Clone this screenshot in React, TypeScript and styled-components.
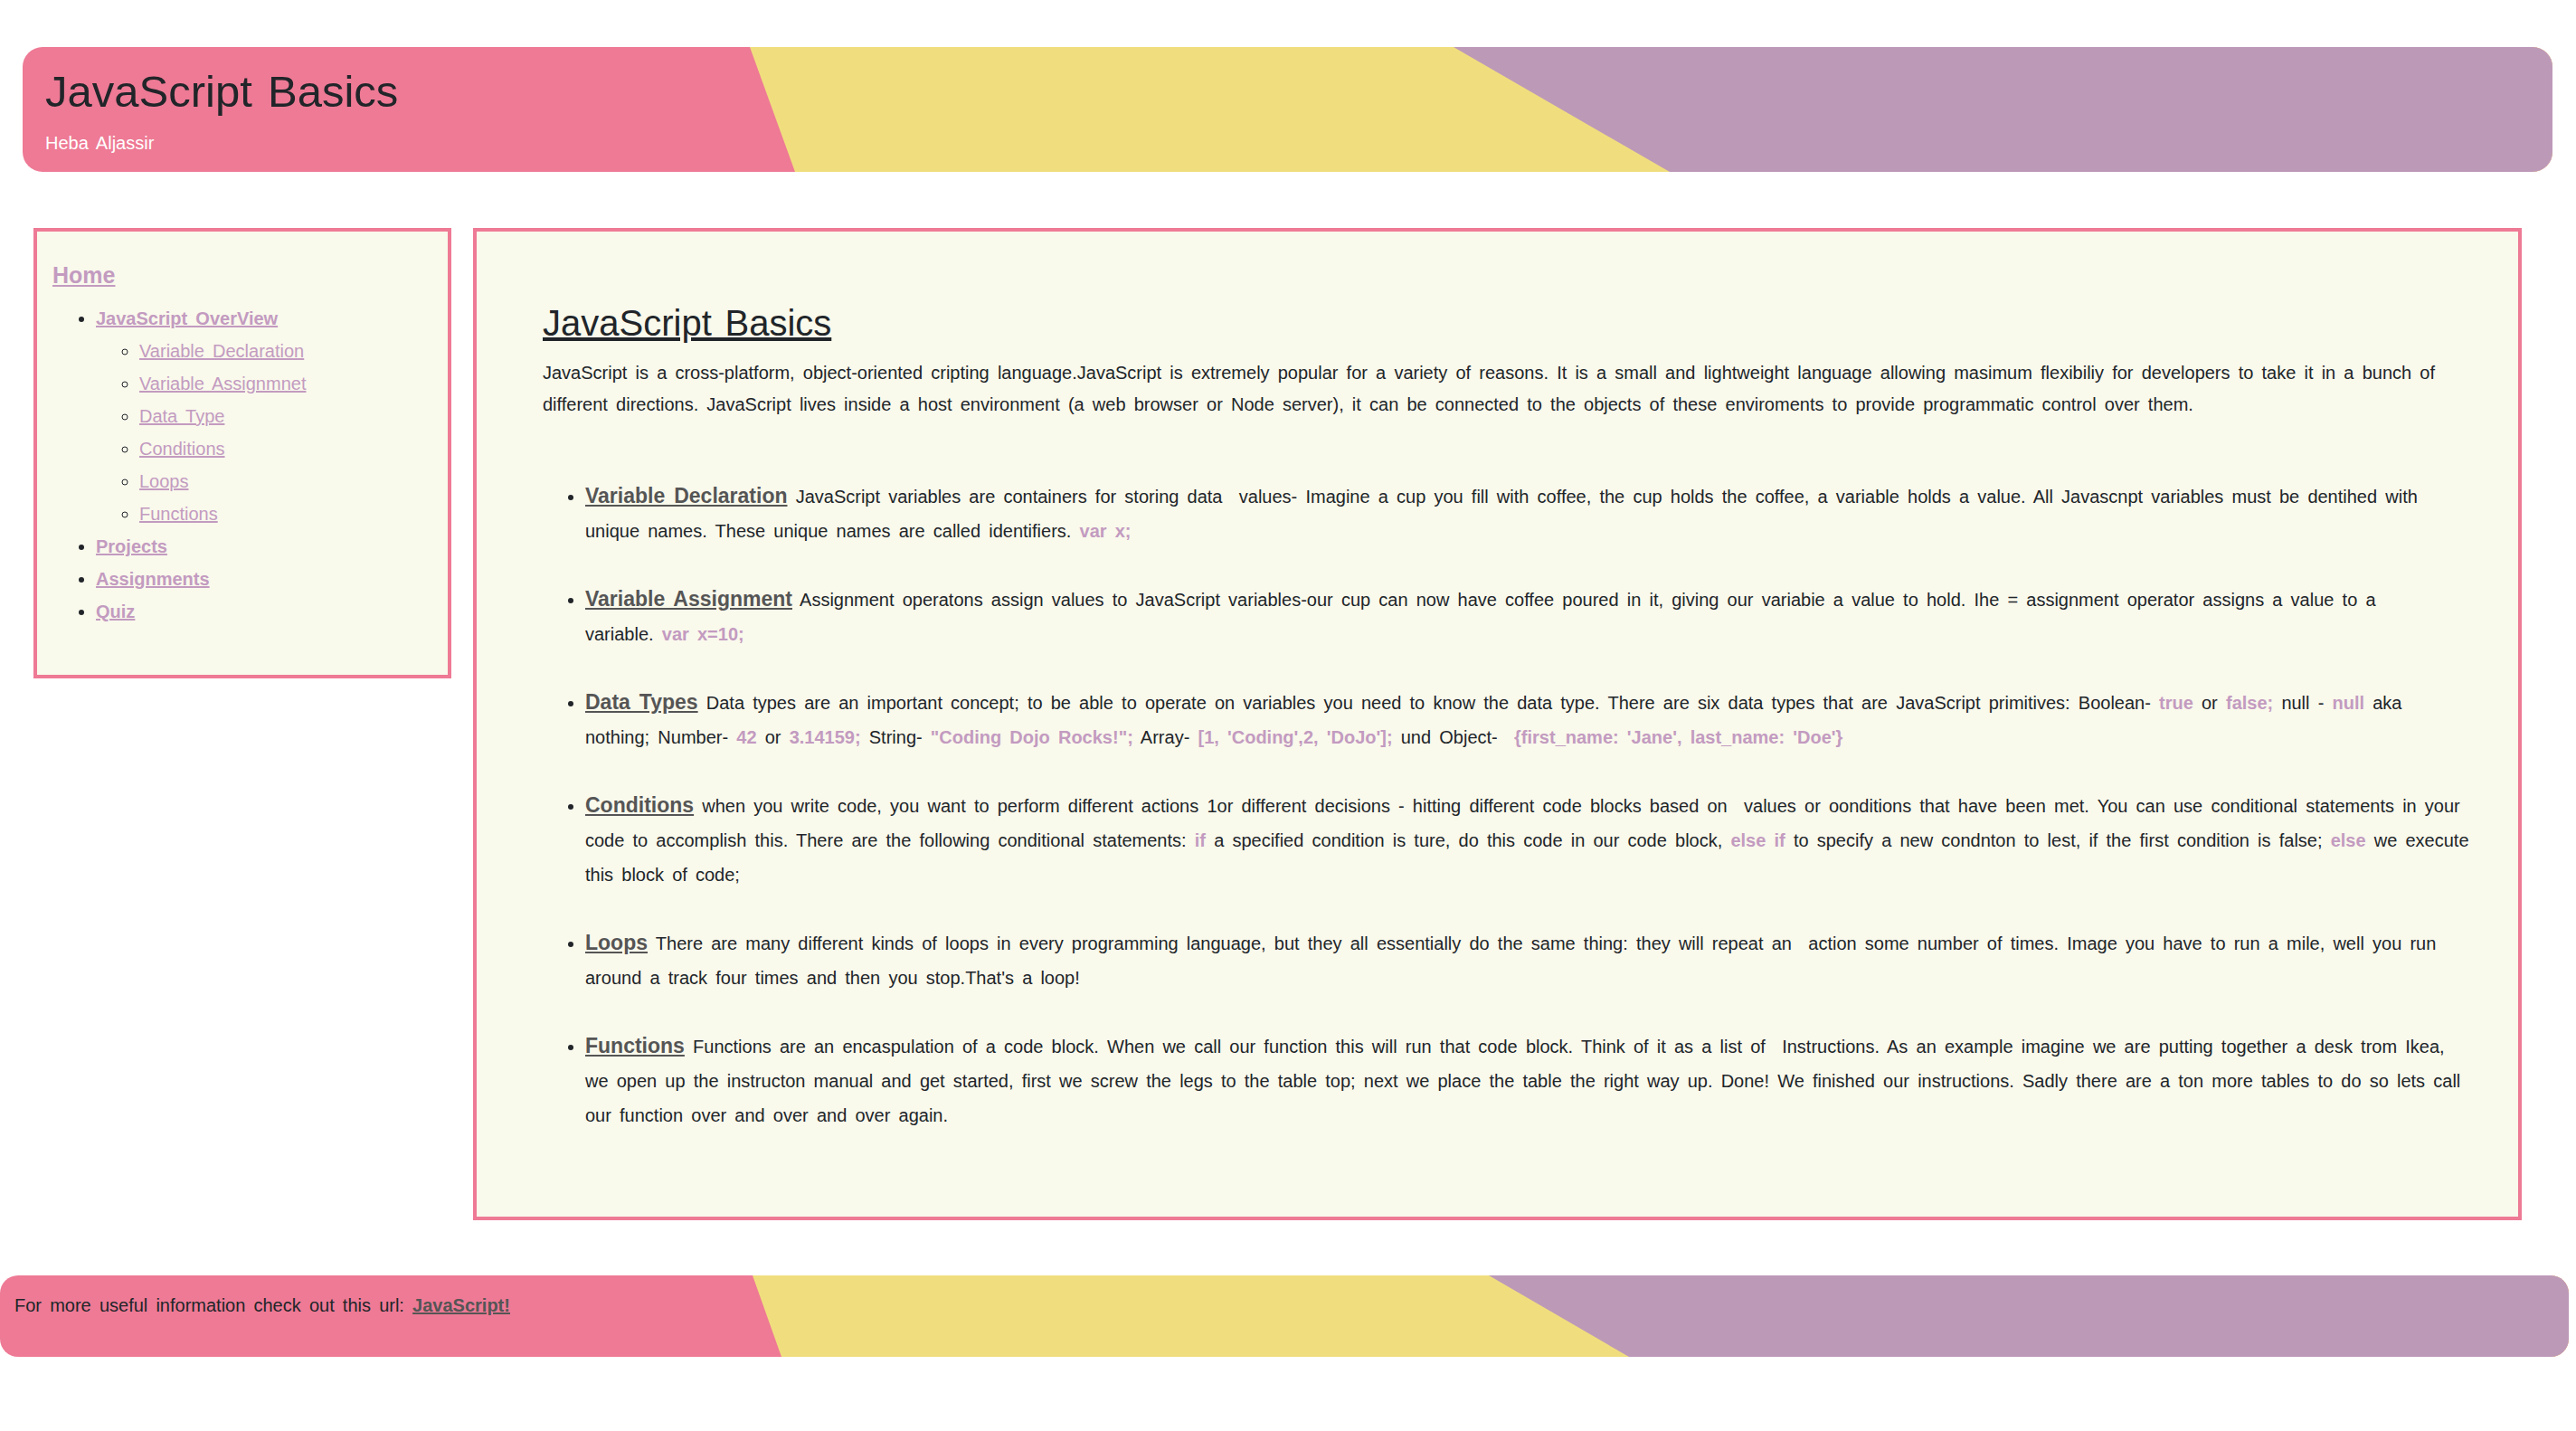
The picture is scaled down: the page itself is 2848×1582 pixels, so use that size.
import React from 'react'
import styled, { createGlobalStyle } from 'styled-components'

const pink = '#ee7a95'
const yellow = '#f0de7e'
const purple = '#bd99b8'
const linkPurple = '#c39bc0'
const panel = '#f9f9ec'
const ink = '#212529'
const gray = '#555555'

const GlobalStyle = createGlobalStyle`
  body {
    margin: 0;
    background: #ffffff;
    color: ${ink};
    font-family: "Liberation Sans", Arial, sans-serif;
    font-size: 20px;
    line-height: 1.5;
    word-spacing: 3.6px;
  }
`

const Page = styled.div`
  padding-top: 52px;
  padding-bottom: 80px;
`

const Banner = styled.header`
  position: relative;
  overflow: hidden;
  height: 138px;
  box-sizing: border-box;
  margin: 0 26px 0 25px;
  padding: 19px 25px 0;
  border-radius: 22px;
  background: ${pink};

  &::before,
  &::after {
    content: '';
    position: absolute;
    inset: 0;
  }

  &::before {
    background: ${yellow};
    clip-path: polygon(804px 0, 100% 0, 100% 100%, 854px 100%);
  }

  &::after {
    background: ${purple};
    clip-path: polygon(1582px 0, 100% 0, 100% 100%, 1821px 100%);
  }
`

const BannerTitle = styled.h1`
  position: relative;
  z-index: 1;
  margin: 0;
  font-size: 49px;
  font-weight: 400;
  line-height: 60px;
  color: ${ink};
`

const Byline = styled.div`
  position: relative;
  z-index: 1;
  margin-top: 12px;
  color: #ffffff;
  line-height: 30px;
`

const Body = styled.div`
  display: flex;
  align-items: flex-start;
  gap: 24px;
  margin-top: 62px;
  padding-left: 37px;
`

const Sidebar = styled.nav`
  width: 462px;
  flex: none;
  box-sizing: border-box;
  padding: 30px 17px 52px;
  background: ${panel};
  border: 4px solid ${pink};
`

const HomeLink = styled.a`
  display: block;
  font-size: 25px;
  font-weight: 700;
  line-height: 36px;
  color: ${linkPurple};
  text-decoration: underline;
`

const NavList = styled.ul<{ $nested?: boolean }>`
  margin: ${({ $nested }) => ($nested ? '0' : '12px 0 0')};
  padding-left: 48px;
  list-style: ${({ $nested }) => ($nested ? 'circle' : 'disc')};
  line-height: 36px;
`

const NavLink = styled.a<{ $bold?: boolean }>`
  color: ${linkPurple};
  font-weight: ${({ $bold }) => ($bold ? 700 : 400)};
  text-decoration: underline;
`

const Content = styled.main`
  width: 2265px;
  flex: none;
  box-sizing: border-box;
  padding: 77px 50px 93px 73px;
  background: ${panel};
  border: 4px solid ${pink};
`

const PageTitle = styled.h2`
  margin: 0 0 14px;
  font-size: 40px;
  font-weight: 400;
  line-height: 48px;
  text-decoration: underline;
`

const Intro = styled.p`
  margin: 0;
  line-height: 35px;
`

const TopicList = styled.ul`
  margin: 64px 0 0;
  padding-left: 47px;
  line-height: 38px;
`

const Topic = styled.li`
  margin-bottom: 37px;

  &:last-child {
    margin-bottom: 0;
  }
`

const TopicName = styled.a`
  font-size: 23px;
  font-weight: 700;
  color: ${gray};
  text-decoration: underline;
`

const Code = styled.span`
  font-weight: 700;
  color: ${linkPurple};
`

const Footer = styled.footer`
  position: relative;
  overflow: hidden;
  height: 90px;
  box-sizing: border-box;
  margin: 61px 8px 0 0;
  padding: 18px 16px 0;
  border-radius: 20px;
  background: ${pink};
  line-height: 30px;

  &::before,
  &::after {
    content: '';
    position: absolute;
    inset: 0;
  }

  &::before {
    background: ${yellow};
    clip-path: polygon(832px 0, 100% 0, 100% 100%, 864px 100%);
  }

  &::after {
    background: ${purple};
    clip-path: polygon(1646px 0, 100% 0, 100% 100%, 1801px 100%);
  }
`

const FooterText = styled.p`
  position: relative;
  z-index: 1;
  margin: 0;
`

const FooterLink = styled.a`
  font-weight: 700;
  color: ${gray};
  text-decoration: underline;
`

const subTopics = [
  'Variable Declaration',
  'Variable Assignmnet',
  'Data Type',
  'Conditions',
  'Loops',
  'Functions',
]

export default function App() {
  return (
    <>
      <GlobalStyle />
      <Page>
        <Banner>
          <BannerTitle>JavaScript Basics</BannerTitle>
          <Byline>Heba Aljassir</Byline>
        </Banner>

        <Body>
          <Sidebar>
            <HomeLink href="#">Home</HomeLink>
            <NavList>
              <li>
                <NavLink $bold href="#">JavaScript OverView</NavLink>
                <NavList $nested>
                  {subTopics.map((t) => (
                    <li key={t}>
                      <NavLink href="#">{t}</NavLink>
                    </li>
                  ))}
                </NavList>
              </li>
              <li>
                <NavLink $bold href="#">Projects</NavLink>
              </li>
              <li>
                <NavLink $bold href="#">Assignments</NavLink>
              </li>
              <li>
                <NavLink $bold href="#">Quiz</NavLink>
              </li>
            </NavList>
          </Sidebar>

          <Content>
            <PageTitle>JavaScript Basics</PageTitle>
            <Intro>
              JavaScript is a cross-platform, object-oriented cripting language.JavaScript is
              extremely popular for a variety of reasons. It is a small and lightweight language
              allowing masimum flexibiliy for developers to take it in a bunch of different
              directions. JavaScript lives inside a host environment (a web browser or Node
              server), it can be connected to the objects of these enviroments to provide
              programmatic control over them.
            </Intro>

            <TopicList>
              <Topic>
                <TopicName href="#">Variable Declaration</TopicName> JavaScript variables are
                containers for storing data{'\u00a0'} values- Imagine a cup you fill with coffee, the
                cup holds the coffee, a variable holds a value. All Javascnpt variables must be
                dentihed with unique names. These unique names are called identifiers.{' '}
                <Code>var x;</Code>
              </Topic>
              <Topic>
                <TopicName href="#">Variable Assignment</TopicName> Assignment operatons assign
                values to JavaScript variables-our cup can now have coffee poured in it, giving our
                variabie a value to hold. Ihe = assignment operator assigns a value to a
                variable.{'\u00a0'}
                <Code>var x=10;</Code>
              </Topic>
              <Topic>
                <TopicName href="#">Data Types</TopicName> Data types are an important concept; to
                be able to operate on variables you need to know the data type. There are six data
                types that are JavaScript primitives: Boolean- <Code>true</Code> or{' '}
                <Code>false;</Code> null - <Code>null</Code> aka nothing; Number- <Code>42</Code> or{' '}
                <Code>3.14159;</Code> String- <Code>"Coding Dojo Rocks!";</Code> Array-{' '}
                <Code>[1, 'Coding',2, 'DoJo'];</Code> und Object-{'\u00a0'}{' '}
                <Code>{"{first_name: 'Jane', last_name: 'Doe'}"}</Code>
              </Topic>
              <Topic>
                <TopicName href="#">Conditions</TopicName> when you write code, you want to perform
                different actions 1or different decisions - hitting different code blocks based
                on{'\u00a0'} values or oonditions that have been met. You can use conditional
                statements in your code to accomplish this. There are the following conditional
                statements: <Code>if</Code> a specified condition is ture, do this code in our code
                block, <Code>else if</Code> to specify a new condnton to lest, if the first
                condition is false; <Code>else</Code> we execute this block of code;
              </Topic>
              <Topic>
                <TopicName href="#">Loops</TopicName> There are many different kinds of loops in
                every programming language, but they all essentially do the same thing: they will
                repeat an{'\u00a0'} action some number of times. Image you have to run a mile, well
                you run around a track four times and then you stop.That's a loop!
              </Topic>
              <Topic>
                <TopicName href="#">Functions</TopicName> Functions are an encaspulation of a code
                block. When we call our function this will run that code block. Think of it as a
                list of{'\u00a0'} Instructions. As an example imagine we are putting together a desk
                trom Ikea, we open up the instructon manual and get started, first we screw the legs
                to the table top; next we place the table the right way up. Done! We finished our
                instructions. Sadly there are a ton more tables to do so lets call our function over
                and over and over again.
              </Topic>
            </TopicList>
          </Content>
        </Body>

        <Footer>
          <FooterText>
            For more useful information check out this url:{' '}
            <FooterLink href="#">JavaScript!</FooterLink>
          </FooterText>
        </Footer>
      </Page>
    </>
  )
}
